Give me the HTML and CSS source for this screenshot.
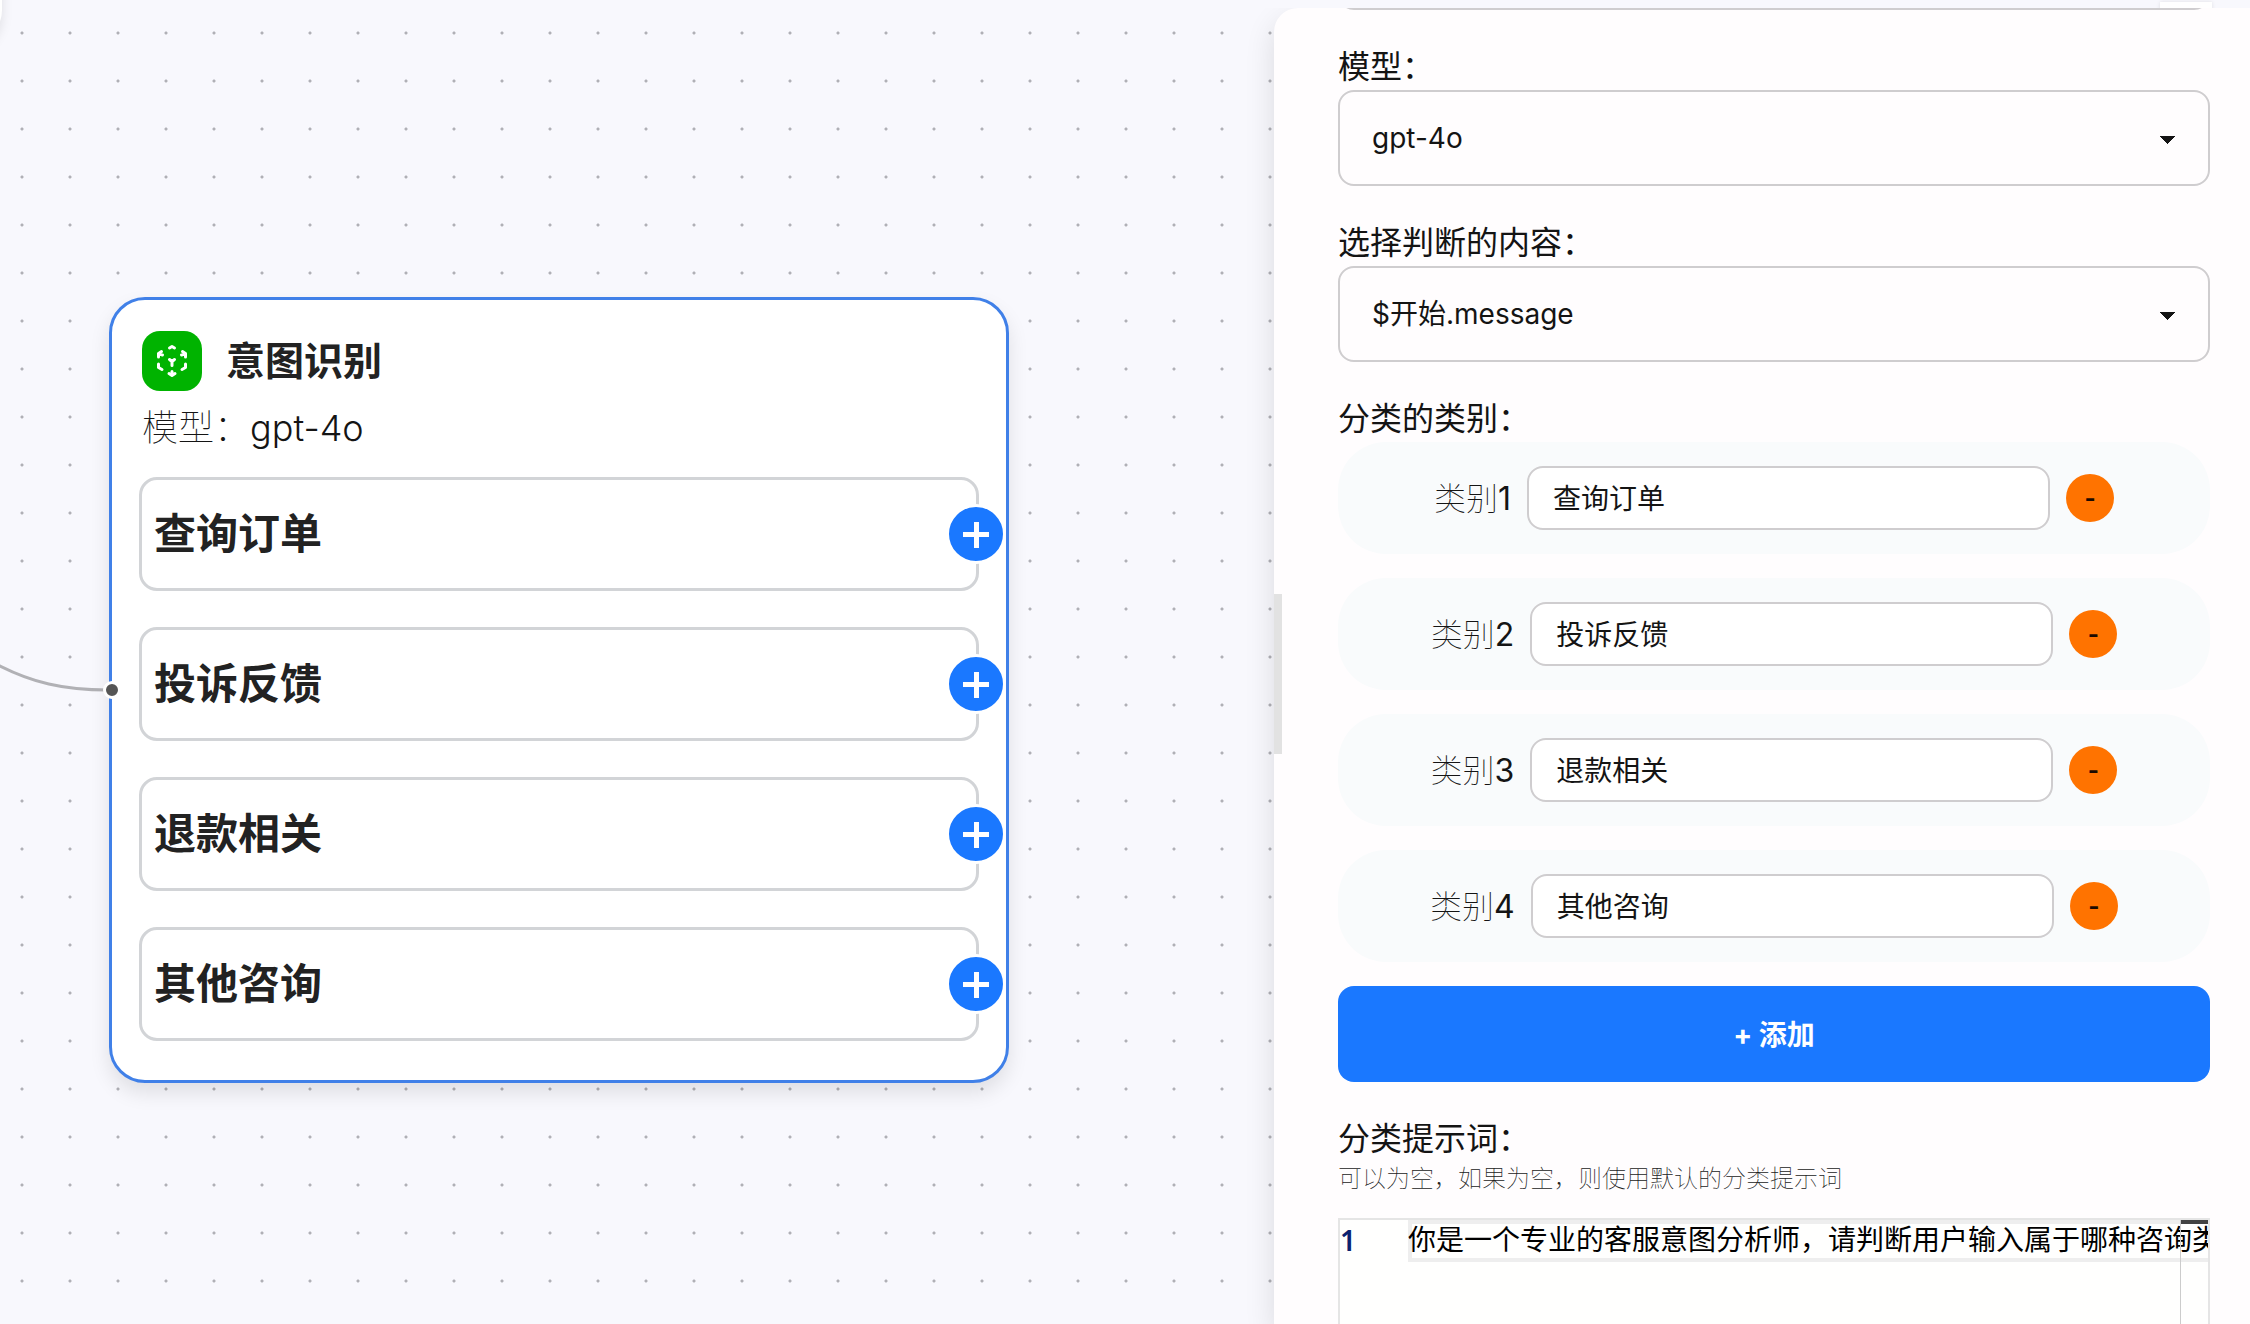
FILE: index.html
```html
<!DOCTYPE html>
<html lang="zh-CN">
<head>
<meta charset="utf-8">
<meta name="viewport" content="width=device-width, initial-scale=1">
<title>意图识别</title>
<link rel="stylesheet" href="styles.css">
</head>
<body>
<div class="workspace">
  <main class="canvas">
    <div class="neighbor-node"></div>
    <svg class="edge" width="120" height="60" viewBox="0 0 120 60" aria-hidden="true">
      <path d="M-10 21 L0 26 C32 42 62 50 108 50"/>
    </svg>
    <article class="node">
      <span class="port"></span>
      <header class="node-header">
        <span class="node-icon">
          <svg width="36" height="36" viewBox="0 0 36 36" aria-hidden="true">
            <path d="M15.500 5l2.500-1.500 2.500 1.500M4.500 14v-3.500l3-2M5 10.500l3.500 1.500M28.500 8.500l3 2v3.500M31 10.500l-3.500 1.500M4.500 21v3.500l3.500 2M31.500 21v3.500l-3.500 2M15 30.500l3 2 3-2M18 28.500v3M15.500 16.500l2.500 2 2.500-2M18 18.500v4"/>
          </svg>
        </span>
        <h1 class="node-title">意图识别</h1>
      </header>
      <p class="node-model">模型：<span class="model-name">gpt-4o</span></p>
      <ul class="options">
        <li class="option">查询订单<button class="plus" type="button" aria-label="+"></button></li>
        <li class="option">投诉反馈<button class="plus" type="button" aria-label="+"></button></li>
        <li class="option">退款相关<button class="plus" type="button" aria-label="+"></button></li>
        <li class="option">其他咨询<button class="plus" type="button" aria-label="+"></button></li>
      </ul>
    </article>
  </main>
  <div class="toolbar-tab"></div>
  <aside class="panel">
    <span class="resize-handle"></span>
    <div class="scrolled-field"></div>
    <form class="settings">
      <div class="field">
        <label class="label" for="model">模型：</label>
        <select class="select" id="model"><option>gpt-4o</option></select>
      </div>
      <div class="field">
        <label class="label" for="content">选择判断的内容：</label>
        <select class="select" id="content"><option>$开始.message</option></select>
      </div>
      <div class="field">
        <h2 class="label">分类的类别：</h2>
        <div class="categories">
          <div class="category">
            <label class="category-label" for="c1">类别<span class="digit">1</span></label>
            <input class="input" id="c1" type="text" value="查询订单">
            <button class="remove" type="button">-</button>
          </div>
          <div class="category">
            <label class="category-label" for="c2">类别<span class="digit">2</span></label>
            <input class="input" id="c2" type="text" value="投诉反馈">
            <button class="remove" type="button">-</button>
          </div>
          <div class="category">
            <label class="category-label" for="c3">类别<span class="digit">3</span></label>
            <input class="input" id="c3" type="text" value="退款相关">
            <button class="remove" type="button">-</button>
          </div>
          <div class="category">
            <label class="category-label" for="c4">类别<span class="digit">4</span></label>
            <input class="input" id="c4" type="text" value="其他咨询">
            <button class="remove" type="button">-</button>
          </div>
          <button class="add" type="button">+ 添加</button>
        </div>
      </div>
      <div class="field prompt">
        <label class="label" for="prompt">分类提示词：</label>
        <p class="hint">可以为空，如果为空，则使用默认的分类提示词</p>
        <div class="editor">
          <div class="gutter">1</div>
          <div class="code">
            <textarea class="code-text" id="prompt" wrap="off" spellcheck="false">你是一个专业的客服意图分析师，请判断用户输入属于哪种咨询类</textarea>
            <span class="ruler"></span>
          </div>
        </div>
      </div>
    </form>
  </aside>
</div>
</body>
</html>
```
FILE: styles.css
```css
* {
  box-sizing: border-box;
}

body {
  margin: 0;
  color: #141414;
  font-family: Inter, "Noto Sans CJK SC", sans-serif;
}

h1, h2, p, ul {
  margin: 0;
  padding: 0;
}

button, input, select, textarea {
  margin: 0;
  font: inherit;
  color: inherit;
}

.workspace {
  display: flex;
  position: relative;
  height: 100vh;
  overflow: hidden;
  background-color: #f8f8fd;
  background-image: radial-gradient(circle at 24px 24px, #b0b0b6 1px, transparent 2px);
  background-size: 48px 48px;
  background-position: -2px 9px;
}

/* Flow canvas */
.canvas {
  flex: 1;
  position: relative;
  min-width: 0;
}

.neighbor-node {
  position: absolute;
  left: -98px;
  top: -98px;
  width: 100px;
  height: 144px;
  border-radius: 36px;
  background: #fff;
  box-shadow: 0 6px 12px rgba(0, 0, 0, 0.1);
}

.edge {
  position: absolute;
  left: 0;
  top: 640px;
  fill: none;
  stroke: #b1b1b5;
  stroke-width: 3;
}

.node {
  position: absolute;
  left: 109px;
  top: 297px;
  width: 900px;
  padding: 30px 27px 39px;
  border: 3px solid #4080e8;
  border-radius: 36px;
  background: #fff;
  box-shadow: 0 10px 20px rgba(0, 0, 0, 0.1);
}

.port {
  position: absolute;
  left: -9px;
  top: 381px;
  width: 18px;
  height: 18px;
  border: 3px solid #fff;
  border-radius: 50%;
  background: #555;
}

.node-header {
  display: flex;
  align-items: center;
  gap: 24px;
  padding-left: 3px;
}

.node-icon {
  display: grid;
  place-items: center;
  width: 60px;
  height: 60px;
  border-radius: 18px;
  background: #00b300;
}

.node-icon svg {
  fill: none;
  stroke: #fff;
  stroke-width: 3;
  stroke-linecap: round;
  stroke-linejoin: round;
}

.node-title {
  font-size: 39px;
  line-height: 62px;
  font-weight: 700;
  color: #222;
}

.node-model {
  padding: 9px 3px 22px;
  font-size: 36px;
  line-height: 54px;
  font-weight: 100;
}

.model-name {
  font-weight: 300;
}

.options {
  display: grid;
  gap: 36px;
  list-style: none;
}

.option {
  position: relative;
  height: 114px;
  padding: 0 12px;
  border: 3px solid #d2d4d7;
  border-radius: 18px;
  font-size: 42px;
  line-height: 108px;
  font-weight: 700;
  color: #222;
}

.plus {
  position: absolute;
  right: -30px;
  top: 24px;
  width: 60px;
  height: 60px;
  padding: 0;
  border: 3px solid #fff;
  border-radius: 50%;
  background:
    linear-gradient(#fff, #fff) center 25px / 26px 5px no-repeat padding-box,
    linear-gradient(#fff, #fff) center 15px / 5px 26px no-repeat padding-box,
    #1a78ff;
}

/* Settings panel */
.toolbar-tab {
  position: absolute;
  right: 38px;
  top: 2px;
  width: 52px;
  height: 20px;
  background: #fff;
  box-shadow: 0 0 4px rgba(0, 0, 0, 0.1);
}

.panel {
  display: flex;
  flex-direction: column;
  flex: 0 0 976px;
  position: relative;
  margin-top: 8px;
  padding: 0 40px 0 64px;
  border-radius: 24px 0 0 0;
  background: #fffdfe;
  box-shadow: 0 12px 30px rgba(0, 0, 0, 0.12);
  clip-path: inset(0 0 0 -40px);
}

.resize-handle {
  position: absolute;
  left: 0;
  top: 586px;
  width: 8px;
  height: 160px;
  background: #e2e2e2;
}

.scrolled-field {
  flex: none;
  height: 96px;
  margin-top: -94px;
  border: 2px solid #cfcdcf;
  border-radius: 16px;
}

.settings {
  display: flex;
  flex: 1;
  flex-direction: column;
  gap: 34px;
  min-height: 0;
  padding-top: 34px;
}

.field {
  display: flex;
  flex-direction: column;
}

.label {
  font-size: 32px;
  line-height: 46px;
  font-weight: 400;
}

.select {
  width: 100%;
  height: 96px;
  padding: 0 32px;
  border: 2px solid #cfcdcf;
  border-radius: 16px;
  appearance: none;
  background:
    linear-gradient(to bottom left, #141414 50%, transparent 50%) right 40px top 44px / 8px 8px no-repeat,
    linear-gradient(to bottom right, #141414 50%, transparent 50%) right 32px top 44px / 8px 8px no-repeat;
  font-size: 28px;
}

.categories {
  display: grid;
  gap: 24px;
}

.category {
  display: flex;
  align-items: center;
  justify-content: center;
  gap: 16px;
  height: 112px;
  border-radius: 48px;
  background: #f9fbfc;
}

.category-label {
  padding-bottom: 4px;
  font-size: 32px;
  font-weight: 100;
}

.digit {
  font-weight: 400;
}

.input {
  width: 60%;
  height: 64px;
  padding: 0 24px 2px;
  border: 2px solid #cfcdcf;
  border-radius: 16px;
  background: #fff;
  font-size: 28px;
}

.remove {
  width: 48px;
  height: 48px;
  padding: 0;
  border: 0;
  border-radius: 50%;
  background: #ff7300;
  color: #1a0a00;
  font-size: 24px;
  font-weight: 700;
}

.add {
  height: 96px;
  padding-bottom: 4px;
  border: 0;
  border-radius: 16px;
  background: #1a78ff;
  color: #fff;
  font-size: 28px;
  font-weight: 700;
}

.prompt {
  flex: 1;
  min-height: 0;
}

.hint {
  margin-bottom: 22px;
  font-size: 24px;
  line-height: 34px;
  font-weight: 100;
  color: #222;
}

.editor {
  display: flex;
  flex: 1;
  border: 2px solid #e5e5e5;
  border-bottom: 0;
  background: #fffffe;
  color: #000;
  font-size: 28px;
  line-height: 40px;
}

.gutter {
  width: 68px;
  color: #0b216f;
  font-family: "Noto Sans", sans-serif;
  font-weight: 600;
}

.code {
  flex: 1;
  position: relative;
  min-width: 0;
  background:
    linear-gradient(#eee, #eee) 0 0 / 100% 4px no-repeat,
    linear-gradient(#eee, #eee) 0 38px / 100% 4px no-repeat,
    linear-gradient(#eee, #eee) 0 0 / 4px 42px no-repeat;
}

.code-text {
  display: block;
  width: 100%;
  height: 100%;
  padding: 0;
  border: 0;
  resize: none;
  overflow: hidden;
  background: none;
  line-height: 40px;
}

.ruler {
  position: absolute;
  right: 0;
  top: 0;
  bottom: 0;
  width: 28px;
  border-left: 1px solid #ccc;
  background: linear-gradient(#424242, #424242) 0 0 / 100% 4px no-repeat;
  pointer-events: none;
}
```
